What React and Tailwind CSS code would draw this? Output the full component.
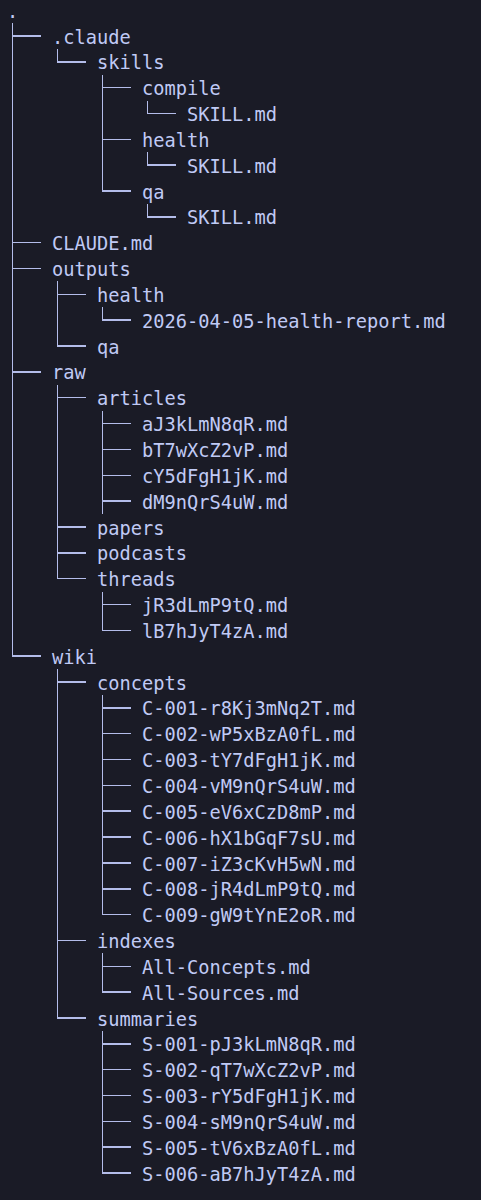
import React from "react";

const TREE = `.
├── .claude
│   └── skills
│       ├── compile
│       │   └── SKILL.md
│       ├── health
│       │   └── SKILL.md
│       └── qa
│           └── SKILL.md
├── CLAUDE.md
├── outputs
│   ├── health
│   │   └── 2026-04-05-health-report.md
│   └── qa
├── raw
│   ├── articles
│   │   ├── aJ3kLmN8qR.md
│   │   ├── bT7wXcZ2vP.md
│   │   ├── cY5dFgH1jK.md
│   │   ├── dM9nQrS4uW.md
│   ├── papers
│   ├── podcasts
│   └── threads
│       ├── jR3dLmP9tQ.md
│       └── lB7hJyT4zA.md
└── wiki
    ├── concepts
    │   ├── C-001-r8Kj3mNq2T.md
    │   ├── C-002-wP5xBzA0fL.md
    │   ├── C-003-tY7dFgH1jK.md
    │   ├── C-004-vM9nQrS4uW.md
    │   ├── C-005-eV6xCzD8mP.md
    │   ├── C-006-hX1bGqF7sU.md
    │   ├── C-007-iZ3cKvH5wN.md
    │   ├── C-008-jR4dLmP9tQ.md
    │   └── C-009-gW9tYnE2oR.md
    ├── indexes
    │   ├── All-Concepts.md
    │   └── All-Sources.md
    └── summaries
        ├── S-001-pJ3kLmN8qR.md
        ├── S-002-qT7wXcZ2vP.md
        ├── S-003-rY5dFgH1jK.md
        ├── S-004-sM9nQrS4uW.md
        ├── S-005-tV6xBzA0fL.md
        └── S-006-aB7hJyT4zA.md`;

function parse(line) {
  const cells = [];
  let i = 0;
  while (i + 4 <= line.length) {
    const chunk = line.slice(i, i + 4);
    if (chunk === "│   ") cells.push("pipe");
    else if (chunk === "    ") cells.push("blank");
    else if (chunk === "├── ") cells.push("tee");
    else if (chunk === "└── ") cells.push("elbow");
    else break;
    i += 4;
  }
  return { cells, name: line.slice(i) };
}

function Cell({ kind }) {
  if (kind === "blank") return <div className="w-[45px] h-full shrink-0" />;
  if (kind === "pipe")
    return (
      <div className="w-[45px] h-full shrink-0 flex">
        <div className="ml-[4.9px] w-[1.5px] h-full bg-[#b4bdea]" />
      </div>
    );
  if (kind === "tee")
    return (
      <div className="w-[45px] h-full shrink-0 flex">
        <div className="ml-[4.9px] w-[1.5px] h-full bg-[#b4bdea]" />
        <div className="w-[27.6px] h-full flex items-center">
          <div className="w-full h-[1.5px] bg-[#b4bdea]" />
        </div>
      </div>
    );
  return (
    <div className="w-[45px] h-full shrink-0 flex">
      <div className="ml-[4.9px] w-[1.5px] h-[13.7px] bg-[#b4bdea]" />
      <div className="w-[27.6px] h-[13.7px] flex items-end">
        <div className="w-full h-[1.5px] bg-[#b4bdea]" />
      </div>
    </div>
  );
}

export default function App() {
  const rows = TREE.split("\n").map(parse);
  return (
    <div className="w-[481px] min-h-[1200px] bg-[#1a1b26] overflow-hidden">
      <div
        className="pl-[7px] mt-[-2.85px] flex flex-col text-[#c0caf5] text-[18.69px]"
        style={{ fontFamily: '"DejaVu Sans Mono", monospace' }}
      >
        {rows.map((r, idx) => (
          <div key={idx} className="h-[25.85px] flex items-stretch">
            {r.cells.map((c, j) => (
              <Cell key={j} kind={c} />
            ))}
            <div className="flex items-center leading-[25.85px] whitespace-pre pt-[3px]">
              {r.name}
            </div>
          </div>
        ))}
      </div>
    </div>
  );
}
